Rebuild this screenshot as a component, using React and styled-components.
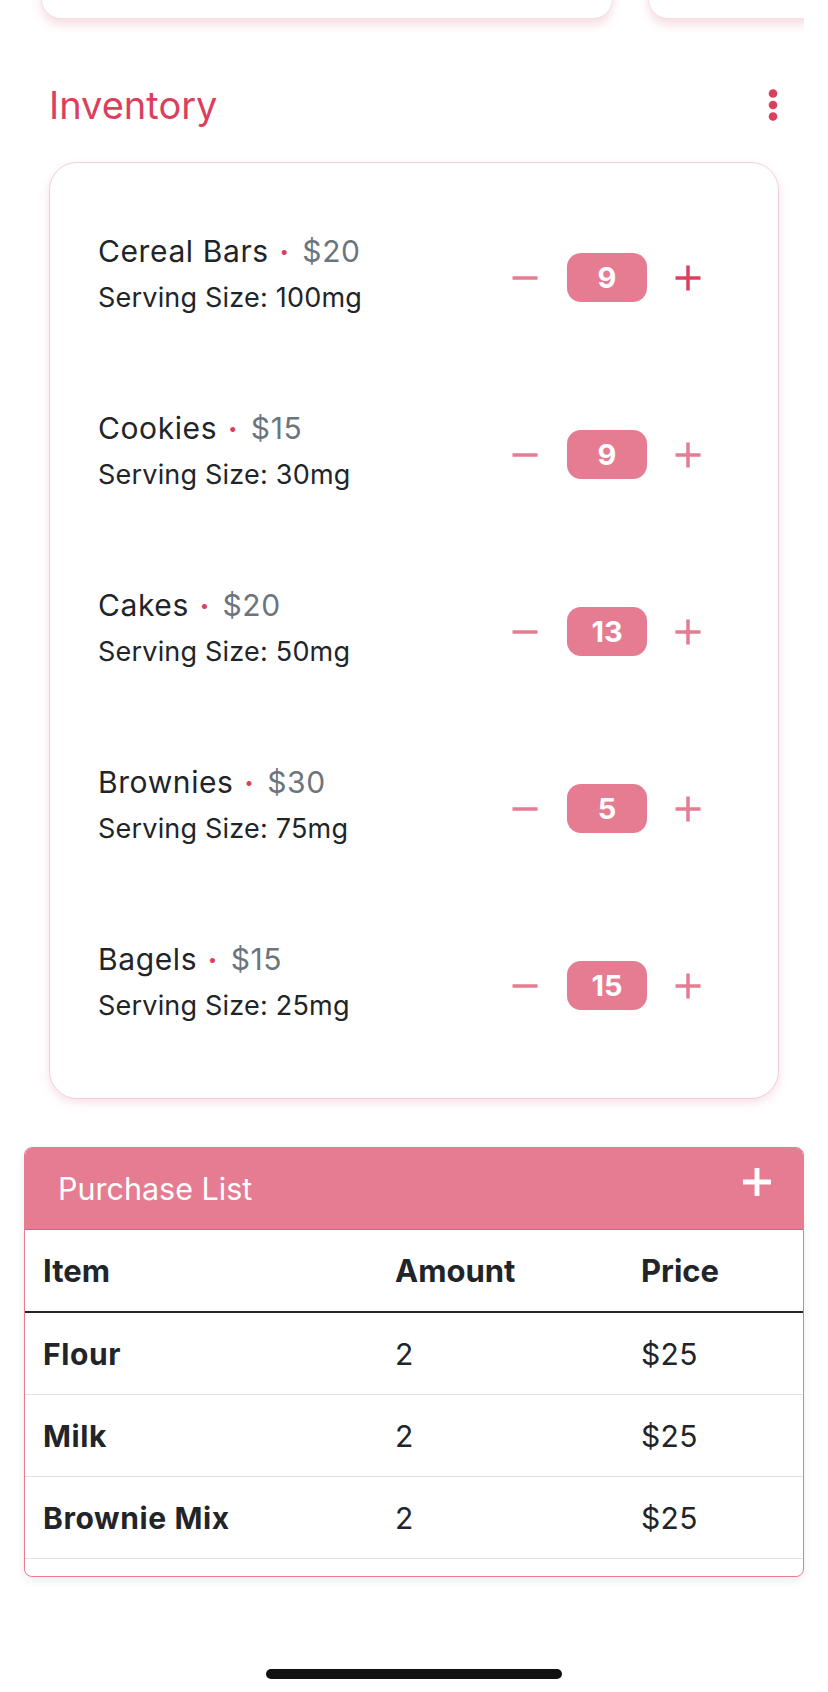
import React from "react";
import styled, { createGlobalStyle } from "styled-components";

const GlobalStyle = createGlobalStyle`
  * { box-sizing: border-box; }
  body {
    margin: 0;
    background: #ffffff;
    font-family: Inter, "Noto Sans", sans-serif;
    color: #212529;
  }
`;

const PINK = "#e57c92";
const RED = "#dc3f5e";

const Page = styled.div`
  width: 828px;
  min-height: 1692px;
  padding: 0 24px 14px;
  display: flex;
  flex-direction: column;
  overflow: hidden;
`;

const Carousel = styled.div`
  margin-top: -141px;
  display: flex;
  gap: 35px;
  overflow: hidden;
  padding: 0 0 20px 17px;
`;

const PromoCard = styled.div`
  flex: 0 0 572px;
  height: 160px;
  background: #fff;
  border-radius: 20px;
  border: 1px solid #f6dde3;
  box-shadow: 0 6px 10px rgba(214, 110, 135, 0.22);
`;

const Section = styled.section`
  margin: 0 25px;
  display: flex;
  flex-direction: column;
`;

const SectionHeader = styled.div`
  margin-top: 16px;
  height: 100px;
  display: flex;
  align-items: center;
  justify-content: space-between;
  padding-right: 1px;
`;

const SectionTitle = styled.h2`
  margin: 0;
  font-size: 38px;
  line-height: 1;
  font-weight: 400;
  color: ${RED};
`;

const MenuButton = styled.button`
  border: 0;
  background: none;
  padding: 0;
  display: flex;
  color: ${RED};
`;

const InventoryCard = styled.div`
  margin-top: 7px;
  border: 1px solid #f2cfd7;
  border-radius: 28px;
  padding: 26px 0 24px;
  background: #fff;
  box-shadow: 0 4px 10px rgba(220, 120, 145, 0.22);
`;

const ItemRow = styled.div`
  height: 177px;
  display: flex;
  align-items: center;
  justify-content: space-between;
  padding: 0 77px 0 48px;
`;

const ItemInfo = styled.div`
  display: flex;
  flex-direction: column;
  gap: 12px;
  margin-bottom: 7px;
`;

const ItemName = styled.div`
  font-size: 30px;
  line-height: 36px;
  letter-spacing: 0.6px;
  color: #212529;
  display: flex;
  align-items: center;
`;

const Bullet = styled.span`
  color: ${RED};
  font-size: 16px;
  margin: 0 13px 0 11px;
`;

const Price = styled.span`
  color: #6c757d;
`;

const Serving = styled.div`
  font-size: 27px;
  line-height: 34px;
  letter-spacing: 0.2px;
  color: #212529;
`;

const Stepper = styled.div`
  display: flex;
  align-items: center;
`;

const StepButton = styled.button`
  border: 0;
  background: none;
  padding: 0;
  display: flex;
  color: ${(p) => p.$color};
`;

const CountBadge = styled.span`
  width: 80px;
  height: 49px;
  margin: 0 28px 0 29px;
  border-radius: 14px;
  background: ${PINK};
  color: #fff;
  font-size: 29px;
  font-weight: 700;
  display: flex;
  align-items: center;
  justify-content: center;
`;

const PurchaseCard = styled.div`
  margin-top: 48px;
  border: 1px solid ${PINK};
  border-radius: 8px;
  overflow: hidden;
  padding-bottom: 17px;
  background: #fff;
  box-shadow: 0 4px 10px rgba(0, 0, 0, 0.07);
`;

const PurchaseHeader = styled.div`
  height: 82px;
  background: ${PINK};
  border-bottom: 1px solid #c86a7e;
  display: flex;
  align-items: center;
  justify-content: space-between;
  padding: 0 32px 0 33px;
`;

const PurchaseTitle = styled.h3`
  margin: 0;
  font-size: 30.5px;
  font-weight: 400;
  color: #fff;
`;

const AddButton = styled.button`
  border: 0;
  background: none;
  padding: 0;
  display: flex;
  margin-bottom: 14px;
  color: #fff;
`;

const Table = styled.table`
  width: 100%;
  border-collapse: collapse;
  table-layout: fixed;
`;

const HeadCell = styled.th`
  height: 82px;
  padding: 0 18px;
  text-align: left;
  font-size: 31px;
  font-weight: 700;
  color: #212529;
  border-bottom: 2px solid #212529;
`;

const Cell = styled.td`
  height: 82px;
  padding: 2px 18px 0;
  font-size: 30px;
  letter-spacing: ${(p) => (p.$bold ? "0.6px" : "0.3px")};
  font-weight: ${(p) => (p.$bold ? 700 : 400)};
  color: #212529;
  border-bottom: 1px solid #dee2e6;
`;

const HomeIndicator = styled.div`
  align-self: center;
  margin-top: 92px;
  width: 296px;
  height: 10px;
  border-radius: 5px;
  background: #111;
`;

const DotsIcon = () => (
  <svg width="10" height="32" viewBox="0 0 10 32">
    <circle cx="5" cy="4.5" r="4.3" fill="currentColor" />
    <circle cx="5" cy="16" r="4.3" fill="currentColor" />
    <circle cx="5" cy="27.5" r="4.3" fill="currentColor" />
  </svg>
);

const MinusIcon = () => (
  <svg width="26" height="26" viewBox="0 0 26 26">
    <line x1="0.5" y1="13" x2="25.5" y2="13" stroke="currentColor" strokeWidth="3.5" />
  </svg>
);

const PlusIcon = ({ size = 26, width = 3.5, cap = "butt" }) => (
  <svg width={size} height={size} viewBox="0 0 26 26">
    <line x1="0.5" y1="13" x2="25.5" y2="13" stroke="currentColor" strokeWidth={width} strokeLinecap={cap} />
    <line x1="13" y1="0.5" x2="13" y2="25.5" stroke="currentColor" strokeWidth={width} strokeLinecap={cap} />
  </svg>
);

const items = [
  { name: "Cereal Bars", price: 20, size: "100mg", count: 9, active: true },
  { name: "Cookies", price: 15, size: "30mg", count: 9 },
  { name: "Cakes", price: 20, size: "50mg", count: 13 },
  { name: "Brownies", price: 30, size: "75mg", count: 5 },
  { name: "Bagels", price: 15, size: "25mg", count: 15 },
];

const purchases = [
  { item: "Flour", amount: 2, price: "$25" },
  { item: "Milk", amount: 2, price: "$25" },
  { item: "Brownie Mix", amount: 2, price: "$25" },
];

export default function App() {
  return (
    <>
      <GlobalStyle />
      <Page>
        <Carousel>
          <PromoCard />
          <PromoCard />
        </Carousel>

        <Section>
          <SectionHeader>
            <SectionTitle>Inventory</SectionTitle>
            <MenuButton aria-label="More">
              <DotsIcon />
            </MenuButton>
          </SectionHeader>

          <InventoryCard>
            {items.map((it) => (
              <ItemRow key={it.name}>
                <ItemInfo>
                  <ItemName>
                    {it.name}
                    <Bullet>•</Bullet>
                    <Price>${it.price}</Price>
                  </ItemName>
                  <Serving>Serving Size: {it.size}</Serving>
                </ItemInfo>
                <Stepper>
                  <StepButton $color={PINK} aria-label="Decrease">
                    <MinusIcon />
                  </StepButton>
                  <CountBadge>{it.count}</CountBadge>
                  <StepButton $color={it.active ? RED : PINK} aria-label="Increase">
                    <PlusIcon />
                  </StepButton>
                </Stepper>
              </ItemRow>
            ))}
          </InventoryCard>
        </Section>

        <PurchaseCard>
          <PurchaseHeader>
            <PurchaseTitle>Purchase List</PurchaseTitle>
            <AddButton aria-label="Add">
              <PlusIcon size={28} width={4.5} cap="round" />
            </AddButton>
          </PurchaseHeader>
          <Table>
            <colgroup>
              <col style={{ width: "352px" }} />
              <col style={{ width: "246px" }} />
              <col />
            </colgroup>
            <thead>
              <tr>
                <HeadCell>Item</HeadCell>
                <HeadCell>Amount</HeadCell>
                <HeadCell>Price</HeadCell>
              </tr>
            </thead>
            <tbody>
              {purchases.map((p) => (
                <tr key={p.item}>
                  <Cell $bold>{p.item}</Cell>
                  <Cell>{p.amount}</Cell>
                  <Cell>{p.price}</Cell>
                </tr>
              ))}
            </tbody>
          </Table>
        </PurchaseCard>

        <HomeIndicator />
      </Page>
    </>
  );
}
